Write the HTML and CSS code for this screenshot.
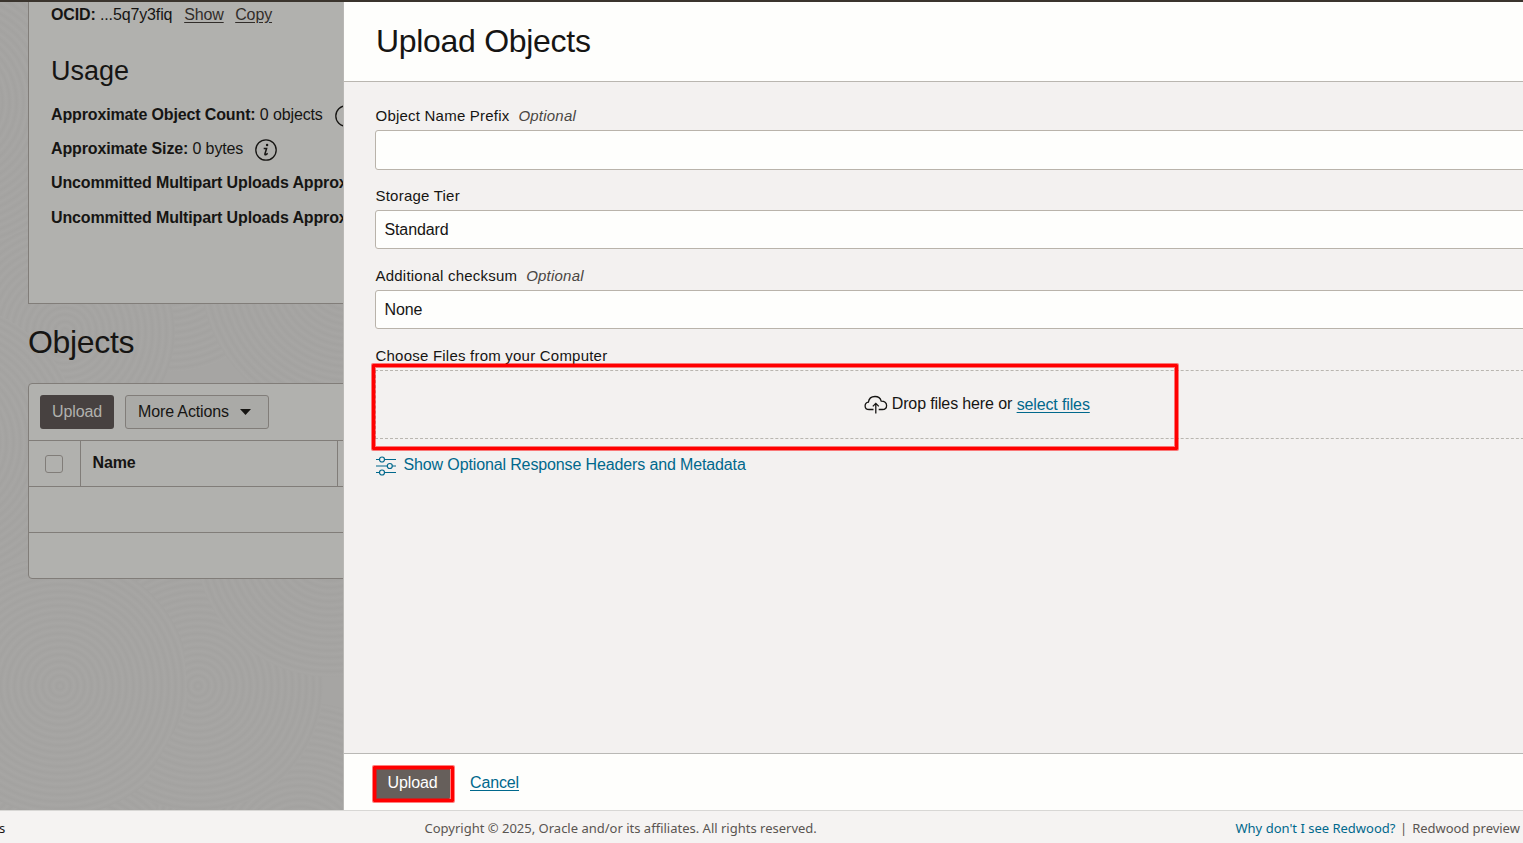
FILE: index.html
```html
<!DOCTYPE html>
<html lang="en">
<head>
<meta charset="utf-8">
<title>Upload Objects</title>
<link rel="stylesheet" href="styles.css">
</head>
<body>
<div class="app">
  <main class="workspace">
    <section class="page">
      <svg class="texture" width="343" height="808" aria-hidden="true">
        <defs>
          <radialGradient id="rings" gradientUnits="userSpaceOnUse" cx="0" cy="0" r="7" spreadMethod="repeat">
            <stop offset="0" stop-color="#a7a6a4"/><stop offset=".5" stop-color="#a3a2a0"/><stop offset="1" stop-color="#a7a6a4"/>
          </radialGradient>
        </defs>
        <g fill="url(#rings)">
          <circle r="150" transform="translate(-50 100)"/>
          <circle r="120" transform="translate(170 250)"/>
          <circle r="150" transform="translate(350 270)"/>
          <circle r="110" transform="translate(65 330)"/>
          <circle r="140" transform="translate(-60 440)"/>
          <circle r="160" transform="translate(80 880)"/>
          <circle r="150" transform="translate(300 850)"/>
          <circle r="125" transform="translate(198 684)"/>
          <circle r="130" transform="translate(60 684)"/>
          <path d="M0-125A125 125 0 0 1 0 125L-60 110L-10 20L-20-120Z" transform="translate(198 684)"/>
          <circle r="135" transform="translate(330 540)"/>
        </g>
      </svg>
      <div class="details">
        <p class="fact ocid"><b>OCID:</b> ...5q7y3fiq <a class="muted-link">Show</a><a class="muted-link">Copy</a></p>
        <h2 class="usage">Usage</h2>
        <p class="fact"><b>Approximate Object Count:</b> 0 objects <svg class="info" viewBox="0 0 22 22"><use href="#info"/></svg></p>
        <p class="fact"><b>Approximate Size:</b> 0 bytes <svg class="info" viewBox="0 0 22 22"><g id="info"><circle cx="11" cy="11" r="10.2" fill="none" stroke="#161513" stroke-width="1.3"/><circle cx="12.1" cy="6" r="1.2" fill="#161513"/><path d="M8.700 9.500h2.900l-1.700 5.400q-.2 1.200 .8 .9l2-1.500" fill="none" stroke="#161513" stroke-width="1.500"/></g></svg></p>
        <p class="fact"><b>Uncommitted Multipart Uploads Approx</b></p>
        <p class="fact last"><b>Uncommitted Multipart Uploads Approx</b></p>
      </div>
      <h1 class="objects">Objects</h1>
      <div class="table">
        <div class="toolbar">
          <button class="btn dark">Upload</button>
          <button class="btn outline">More Actions <svg width="11" height="6"><path d="M0 0h11L5.500 6z" fill="#161513"/></svg></button>
        </div>
        <div class="row head">
          <div class="cell check"><span class="checkbox"></span></div>
          <div class="cell name">Name</div>
        </div>
        <div class="row"></div>
        <div class="row"></div>
      </div>
    </section>
    <section class="drawer">
      <header class="drawer-head"><h1>Upload Objects</h1></header>
      <div class="drawer-body">
        <label class="label">Object Name Prefix <i>Optional</i></label>
        <div class="field tall"></div>
        <label class="label">Storage Tier</label>
        <div class="field">Standard</div>
        <label class="label">Additional checksum <i>Optional</i></label>
        <div class="field">None</div>
        <label class="label">Choose Files from your Computer</label>
        <div class="dropzone">
          <div class="highlight zone-mark"></div>
          <svg class="cloud" width="24" height="20" viewBox="0 0 24 20" fill="none" stroke="#161513" stroke-width="1.3"><path d="M9.500 14.500H5.200C2.900 14.500 1.100 13 1.100 10.900c0-2 1.400-3.400 3.300-3.700C4.900 3.700 7.600 1.500 11 1.500c3.100 0 5.500 1.900 6.200 4.600 3.200-.1 5.400 1.700 5.400 4.300 0 2.400-1.800 4.100-4.300 4.100h-3.600M11.800 18.500V8.600M8.800 11.400l3-3 3 3"/></svg>
          <span class="drop-text">Drop files here or</span>
          <a class="link select">select files</a>
        </div>
        <a class="optional"><svg width="21" height="20" viewBox="0 0 21 20" fill="none" stroke="#00688c" stroke-width="1.2"><path d="M0 3.500h3.400M8.600 3.500H20M0 10h11.200M16.400 10H20M0 16.500h3.400M8.600 16.500H20"/><circle cx="6" cy="3.500" r="2.500"/><circle cx="13.800" cy="10" r="2.500"/><circle cx="6" cy="16.500" r="2.500"/></svg><span>Show Optional Response Headers and Metadata</span></a>
      </div>
      <footer class="drawer-foot">
        <div class="upload-wrap"><button class="btn primary">Upload</button><div class="highlight button-mark"></div></div>
        <a class="link cancel">Cancel</a>
      </footer>
    </section>
  </main>
  <footer class="site-foot">
    <span class="tail">s</span>
    <span class="copyright">Copyright © 2025, Oracle and/or its affiliates. All rights reserved.</span>
    <span class="redwood"><a>Why don't I see Redwood?</a><span class="bar">|</span><span class="preview">Redwood preview</span></span>
  </footer>
</div>
</body>
</html>
```
FILE: styles.css
```css
* { box-sizing: border-box; }
body { margin: 0; overflow: hidden; color: #161513; font: 16px/20px "Liberation Sans", Arial, sans-serif; letter-spacing: -.13px; }
h1, h2, p { margin: 0; font-weight: 400; }
.app { width: 1523px; height: 843px; display: flex; flex-direction: column; border-top: 2px solid #3a342d; overflow: hidden; }
.workspace { height: 808px; display: grid; grid-template-columns: 343px 1180px; }

/* Dimmed page behind the drawer */
.page { position: relative; overflow: hidden; background: #a6a5a3; padding-left: 28px; display: flex; flex-direction: column; }
.texture { position: absolute; left: 0; top: 0; }
.details { position: relative; width: 900px; height: 302px; padding: 3px 0 0 22px; background: #b1b1ae; border: solid #817d79; border-width: 0 0 1px 1px; }
.fact { height: 34px; white-space: nowrap; }
.fact b { letter-spacing: -.14px; }
.info { width: 22px; height: 22px; margin-left: 7.5px; vertical-align: -7px; }
.muted-link { margin-left: 7.5px; margin-right: 4px; color: #312d2a; text-decoration: underline; text-underline-offset: 2px; }
.usage { height: 64px; margin-top: 16px; margin-bottom: -14px; font-size: 27px; line-height: 32px; letter-spacing: 0; }
.last { margin-top: 1px; }
.objects { position: relative; height: 79px; padding-top: 18px; font-size: 32px; line-height: 40px; letter-spacing: -.32px; }
.table { position: relative; width: 900px; height: 196px; background: #b1b1ae; border: 1px solid #817d79; border-radius: 4px; }
.toolbar { height: 56px; display: flex; gap: 11px; padding: 11px; }
.row { height: 46px; border-top: 1px solid #817d79; }
.head { display: flex; }
.cell { border-right: 1px solid #817d79; }
.check { width: 52px; padding: 14px 16px; }
.checkbox { display: block; width: 18px; height: 18px; border: 1px solid #817d79; border-radius: 3px; }
.name { width: 257px; padding: 12px 11.5px; font-weight: 700; }
.btn { font: inherit; letter-spacing: inherit; height: 34px; padding: 0; border-radius: 3px; border: 0; }
.dark { width: 74px; background: #474140; color: #b1b1ae; }
.outline { width: 144px; display: flex; align-items: center; gap: 11px; padding: 0 12px; border: 1px solid #817d79; background: #aaaaa7; color: #161513; }

/* Drawer */
.drawer { display: grid; grid-template-rows: 80px 671px 57px; overflow: hidden; border-left: 1px solid #b9b8b5; background: #fefefc; }
.drawer-head { padding: 19px 0 0 32px; border-bottom: 1px solid #b9b6b0; }
.drawer-head h1 { font-size: 32px; line-height: 40px; letter-spacing: -.3px; }
.drawer-body { padding: 24px 0 0 31px; background: #f3f1f0; }
.label { display: block; height: 24px; padding-left: .5px; font-size: 15px; line-height: 20px; letter-spacing: .22px; white-space: nowrap; }
.label i { margin-left: 4.5px; color: #4a4643; }
.field { width: 1204px; height: 39px; margin-bottom: 17px; padding: 9px 8.5px; border: 1px solid #b9b3aa; border-radius: 3px; background: #fefefc; }
.field.tall { height: 40px; margin-bottom: 16px; }
.dropzone { position: relative; width: 1204px; height: 69px; display: flex; justify-content: center; align-items: center; border: 1px dashed #b9b6b0; }
.cloud { margin-right: 3.5px; }
.drop-text { margin-bottom: 2px; }
.link { color: #00688c; text-decoration: underline; text-underline-offset: 2px; }
.select { margin: 0 0 0 4.5px; }
.highlight { position: absolute; border: 3px solid #f00; border-radius: 1px; box-shadow: 0 0 0 1px rgba(255, 0, 0, .5), inset 0 0 0 1px rgba(255, 0, 0, .5); }
.zone-mark { left: -4px; top: -7px; width: 806px; height: 86px; }
.optional { display: flex; align-items: center; gap: 7.5px; margin-top: 16px; color: #00688c; }
.optional svg { position: relative; left: 1px; top: 1px; }
.drawer-foot { display: flex; gap: 20px; padding: 12px 0 0 31px; border-top: 1px solid #b9b8b5; }
.upload-wrap { position: relative; width: 75px; height: 34px; }
.primary { width: 75px; background: #665f5b; color: #fff; }
.button-mark { left: -2px; top: 0; width: 81px; height: 36px; }
.cancel { padding-top: 7px; }

.site-foot { height: 33px; display: grid; grid-template-columns: 424.500px 811px 287.500px; align-items: center; padding-top: 2px; border-top: 1px solid #d8d7d5; background: #f5f3f2; font: 13px/20px "Noto Sans", sans-serif; letter-spacing: 0; color: #5a5551; white-space: nowrap; }
.tail { color: #161513; margin-left: -1px; }
.redwood { display: flex; }
.redwood a { color: #00688c; }
.bar { margin: 0 5px 0 4.500px; }
.preview { letter-spacing: -.03px; }
```
